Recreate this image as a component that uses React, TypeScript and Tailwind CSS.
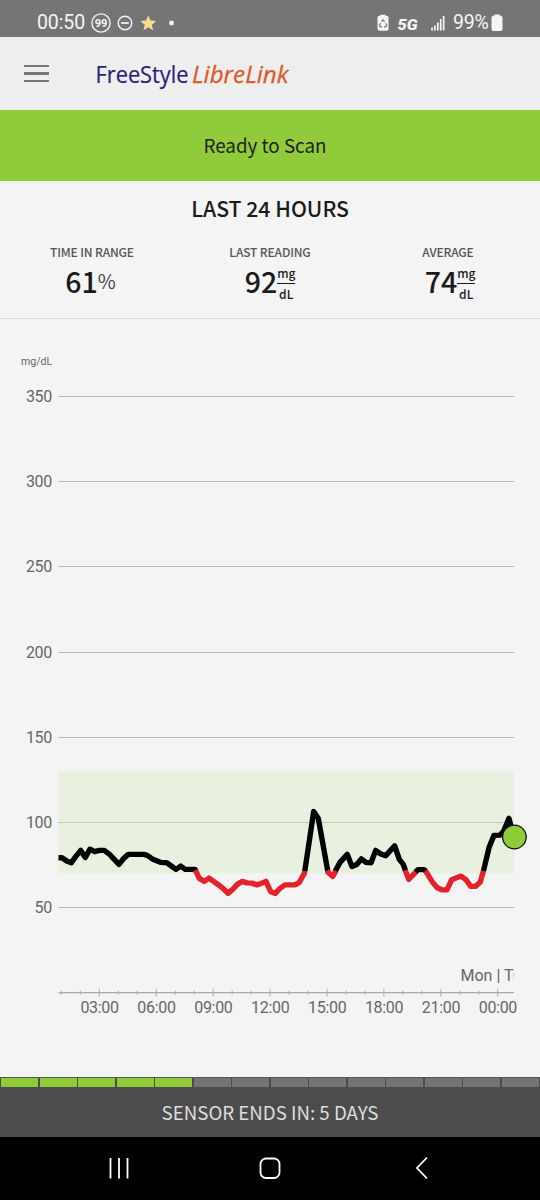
import type { ReactNode } from 'react';
import clsx from 'clsx';

const GRID = [350, 300, 250, 200, 150, 100, 50];
const HOURS = ['03:00', '06:00', '09:00', '12:00', '15:00', '18:00', '21:00', '00:00'];

// value -> y inside the chart
const toY = (v: number) => 77.6 + (350 - v) * 1.7035;

const TRACE: { low: boolean; points: string }[] = [
  {
    low: false,
    points:
      '58.5,539.3 62,539.3 66.7,542.5 71.3,544.3 76,537.7 80.7,532 85.3,539 90,530.8 94.7,533.3 99.5,532 104.3,532 109.3,535.7 119,546 123.7,540 128.3,536 144,536 147.3,537 152.3,540.5 161,544 166.7,544.3 176,551 180.7,547.7 185.3,551 195,551 196,552.6',
  },
  {
    low: true,
    points:
      '195.4,551.8 199.3,560 204.3,563 209,559.7 218.3,566.3 223.3,570.3 228,575 232.7,571 237.3,566 242.3,563 247,564.5 252,564.7 257,566.5 266,563 270.7,573.3 275.3,575 280,570 285,566.5 295,566.5 299.3,564 304.3,555 304.8,552.5',
  },
  { low: false, points: '304.8,552.8 313.7,493 318.3,500 327.8,552.8' },
  {
    low: false,
    points:
      '335,553.2 340,544 347.3,536 352,548 356.7,546 361.3,540.5 366,544 371,544.3 375.7,532 380.3,535.3 385.7,537.3 394.7,527.5 399.3,541 403.3,546 405.6,552.8',
  },
  { low: true, points: '326.6,552.5 332.8,558 335.8,552.5' },
  { low: true, points: '405.3,552 408.7,561 416.5,553' },
  { low: false, points: '415.5,553.6 418,551.2 424,551.2 426,552.8' },
  {
    low: true,
    points:
      '425.4,552.4 432,563 437.3,569.3 442,571.5 447,571.5 451.7,561.3 461,557.7 466,561.3 470.7,568 475.3,568 480.3,563.5 483.4,552.5',
  },
  { low: false, points: '483.4,552.8 489.3,528.3 494,517 500,516.7 503.7,512.7 509,500 513.3,518' },
];

function StatusBar() {
  return (
    <div className="flex h-[37px] items-start bg-[#757575] pt-[13px] pl-[37px] font-['Roboto',sans-serif] text-[#f5f5f5]">
      <span className="w-[54px] text-[19.5px] leading-[20px] tracking-[-0.1px]">00:50</span>
      <svg width="90" height="22" viewBox="0 0 90 22" fill="none" stroke="#f5f5f5" strokeWidth="1.4">
        <circle cx="10" cy="10" r="9.1" />
        <text x="10" y="14" textAnchor="middle" fontSize="11" fontWeight="700" fill="#f5f5f5" stroke="none">
          99
        </text>
        <circle cx="34" cy="10" r="6.8" />
        <path d="M30.3 10h7.4" strokeWidth="1.8" />
        <path
          d="M57.3 2.3l2.2 5.3 5.7.4-4.4 3.7 1.4 5.7-4.9-3.1-4.9 3.1 1.4-5.7-4.4-3.7 5.7-.4z"
          fill="#fbdc8d"
          stroke="none"
        />
        <circle cx="80.5" cy="10" r="2.4" fill="#f5f5f5" stroke="none" />
      </svg>
      <svg className="mr-px ml-auto" width="76" height="22" viewBox="0 0 76 22" fill="#f5f5f5">
        <path d="M4.5 2.8V1.8h5v1h1.3Q12.5 2.8 12.5 4.5V16Q12.5 17.8 10.5 17.8H3.5Q1.5 17.8 1.5 16V4.5Q1.5 2.8 3.2 2.8z" />
        <g fill="none" stroke="#757575" strokeWidth="1.2">
          <path d="M5.4 9L7 6.700l1.6 2.3" />
          <path d="M9.6 10.2l1.1 2.1-1.1 1.5H8" />
          <path d="M6.2 13.8H4.5L3.4 12.3l1.1-2.1" />
        </g>
        <text
          x="21.5"
          y="17.3"
          fontSize="14.5"
          fontWeight="900"
          fontStyle="italic"
          textLength="20"
          lengthAdjust="spacingAndGlyphs"
        >
          5G
        </text>
        <path d="M55.2 14.5h1.7v3h-1.7zM58.1 12.5h1.7v5h-1.7zM61 9.500h1.7v8H61zM63.9 6h1.7v11.5h-1.7zM66.8 3h1.7v14.5h-1.7z" />
      </svg>
      <span className="w-[38px] text-[19.5px] leading-[20px] tracking-[-0.2px]">99%</span>
      <svg className="mr-[37px]" width="12" height="22" viewBox="0 0 12 22" fill="#f5f5f5">
        <path d="M3.5 2.5V1.500h5v1h.8Q11.500 2.700 11.500 4.800V16Q11.500 18 9.500 18H2.500Q.5 18 .5 16V4.800Q.5 2.700 2.700 2.500z" />
      </svg>
    </div>
  );
}

function Header() {
  return (
    <header className="flex h-[73px] items-center bg-[#eee] pl-6">
      <div className="flex w-[25px] flex-col gap-[5px]">
        <span className="h-[2.4px] bg-[#777]" />
        <span className="h-[2.4px] bg-[#777]" />
        <span className="h-[2.4px] bg-[#777]" />
      </div>
      <svg className="ml-[46px]" width="200" height="44" viewBox="0 0 200 44">
        <text
          x="0.5"
          y="30.5"
          fontFamily="'Open Sans', sans-serif"
          fontSize="24.5"
          fill="#29217a"
          stroke="#29217a"
          strokeWidth="0.2"
          textLength="93"
          lengthAdjust="spacingAndGlyphs"
        >
          FreeStyle
        </text>
        <text
          x="97"
          y="30.5"
          fontFamily="'Open Sans', sans-serif"
          fontStyle="italic"
          fontWeight="500"
          fontSize="24"
          fill="#dc5a2b"
          stroke="#dc5a2b"
          strokeWidth="0.3"
          textLength="96.5"
          lengthAdjust="spacingAndGlyphs"
        >
          LibreLink
        </text>
      </svg>
    </header>
  );
}

type StatProps = { label: string; value: number; className?: string; children: ReactNode };

function Stat({ label, value, className, children }: StatProps) {
  return (
    <div className="flex w-[178px] flex-col items-center">
      <p className="text-[12px] leading-[18px] font-medium tracking-[-0.15px] text-[#555]">{label}</p>
      <div className={clsx('mt-[4px] flex h-[36px] items-center', className)}>
        <span className="-mt-[4px] text-[28.5px] leading-[36px] font-medium text-[#1a1a1a]">{value}</span>
        {children}
      </div>
    </div>
  );
}

function MgDl() {
  return (
    <span className="mt-[2px] flex w-[18px] flex-col items-center text-[12px] leading-[18px] font-medium text-[#1a1a1a]">
      <span className="-mt-px h-[19px]">mg</span>
      <span className="h-[1.5px] w-full bg-[#1a1a1a]" />
      <span className="h-[19px] pt-px">dL</span>
    </span>
  );
}

function Chart() {
  return (
    <svg className="block font-['Roboto',sans-serif]" width="540" height="758" viewBox="0 0 540 758" fill="#666">
      <text x="21" y="46" fontSize="10.600">
        mg/dL
      </text>
      <rect x="58.5" y="452.3" width="455.5" height="102.2" fill="#e8f0df" />
      {GRID.map((v) => (
        <g key={v}>
          <path d={`M58 ${Math.floor(toY(v)) + 0.5}H514`} stroke={v === 100 ? '#c3cabd' : '#bbb'} />
          <text x="52" y={toY(v) + 5.4} fontSize="16" letterSpacing="-0.3" textAnchor="end">
            {v}
          </text>
        </g>
      ))}
      <g transform="translate(0 -0.6)">
        {TRACE.map((t) => (
          <polyline
            key={t.points}
            points={t.points}
            fill="none"
            stroke={t.low ? '#e3222b' : '#000'}
            strokeWidth="5.4"
            strokeLinejoin="round"
          />
        ))}
      </g>
      <circle cx="514.4" cy="518" r="11.8" fill="#8fcb3b" stroke="#111" strokeWidth="1.3" />

      {/* day marker runs under the right edge of the plot */}
      <svg x="440" y="640" width="74" height="40">
        <text x="20.5" y="22" fontSize="16">
          Mon | Tue
        </text>
      </svg>
      <path d="M58.5 673.7H514" stroke="#aaa" strokeWidth="1.3" />
      {Array.from({ length: 24 }, (_, i) => {
        const x = 61.4 + i * 18.97;
        const h = i % 3 === 2 ? 4 : 2;
        return <path key={i} d={`M${x} ${673.7 - h}v${h * 2}`} stroke="#aaa" />;
      })}
      {HOURS.map((h, i) => (
        <text key={h} x={99.6 + i * 56.9} y="693.5" fontSize="16" letterSpacing="-0.3" textAnchor="middle">
          {h}
        </text>
      ))}
    </svg>
  );
}

function SensorLife() {
  return (
    <div className="h-[60px] bg-[#4c4c4c]">
      <div className="flex h-[10px] gap-[1.5px] border-t border-[#555] px-px">
        {Array.from({ length: 14 }, (_, i) => (
          <span key={i} className={clsx('h-[9px] flex-1', i < 5 ? 'bg-[#8fcb3b]' : 'bg-[#747474]')} />
        ))}
      </div>
      <p className="pt-[11px] text-center text-[18.7px] leading-[28px] text-[#ddd]">SENSOR ENDS IN: 5 DAYS</p>
    </div>
  );
}

function NavBar() {
  return (
    <nav className="flex h-[63px] justify-center bg-black">
      <svg width="540" height="63" viewBox="0 0 540 63" fill="none" stroke="#fff" strokeWidth="1.8">
        <path d="M110.5 21v20.5M119 21v20.5M127.5 21v20.5" />
        <rect x="260.5" y="21.5" width="19" height="19.5" rx="5.5" />
        <path d="M427 20.5L417 31l10 10.5" />
      </svg>
    </nav>
  );
}

export default function App() {
  return (
    <div className="h-[1200px] w-[540px] overflow-hidden bg-[#f4f4f4] font-['Noto_Sans_CJK_SC',sans-serif]">
      <StatusBar />
      <Header />
      <div className="flex h-[71px] items-center justify-center bg-[#8fcb3b] pr-[10px] text-[18.8px] text-[#222]">
        Ready to Scan
      </div>
      <section className="h-[138px] border-b border-[#ddd]">
        <h1 className="pt-[11px] text-center text-[21.2px] leading-[32px] font-medium text-[#1a1a1a]">LAST 24 HOURS</h1>
        <div className="mt-[19px] flex justify-center">
          <Stat label="TIME IN RANGE" value={61}>
            <span className="-mt-[4px] mr-[3px] text-[19.5px] leading-[36px] text-[#444]">%</span>
          </Stat>
          <Stat label="LAST READING" value={92}>
            <MgDl />
          </Stat>
          <Stat label="AVERAGE" value={74} className="ml-[4px]">
            <MgDl />
          </Stat>
        </div>
      </section>
      <Chart />
      <SensorLife />
      <NavBar />
    </div>
  );
}
